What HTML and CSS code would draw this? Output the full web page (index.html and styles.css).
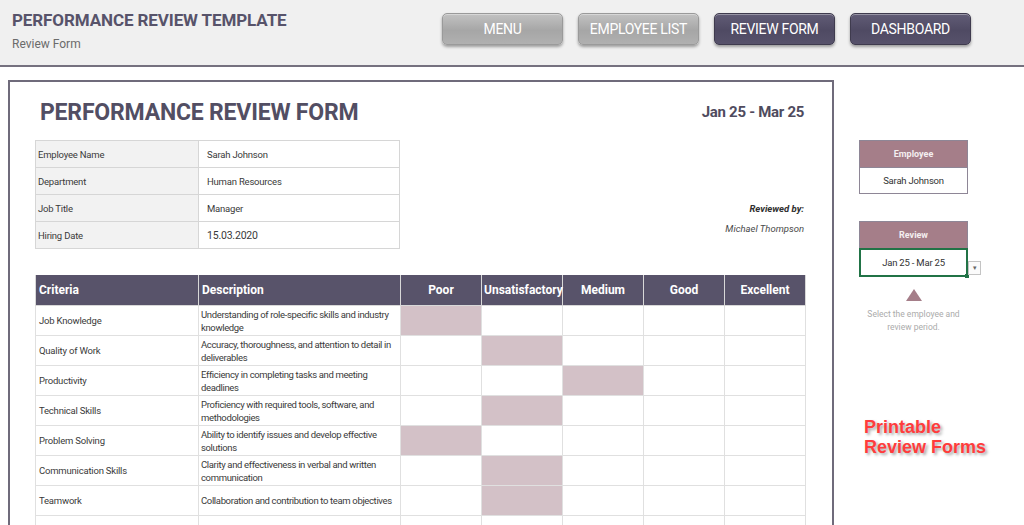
FILE: index.html
```html
<!DOCTYPE html>
<html lang="en">
<head>
  <meta charset="UTF-8">
  <title>Performance Review Template - Review Form</title>
  <link rel="stylesheet" href="styles.css">
</head>
<body>
  <!-- Top bar with title and navigation -->
  <div class="topbar">
    <div class="brand">
      <h1>PERFORMANCE REVIEW TEMPLATE</h1>
      <div class="subtitle">Review Form</div>
    </div>
    <div class="nav">
      <button class="nav-btn light">MENU</button>
      <button class="nav-btn light">EMPLOYEE LIST</button>
      <button class="nav-btn dark">REVIEW FORM</button>
      <button class="nav-btn dark">DASHBOARD</button>
    </div>
  </div>

  <div class="main">
    <!-- Printable form sheet -->
    <div class="sheet">
      <div class="sheet-head">
        <h2>PERFORMANCE REVIEW FORM</h2>
        <div class="period">Jan 25 - Mar 25</div>
      </div>

      <div class="info-row">
        <table class="info">
          <tr><td class="label">Employee Name</td><td>Sarah Johnson</td></tr>
          <tr><td class="label">Department</td><td>Human Resources</td></tr>
          <tr><td class="label">Job Title</td><td>Manager</td></tr>
          <tr><td class="label">Hiring Date</td><td class="date">15.03.2020</td></tr>
        </table>
        <div class="reviewer">
          <div class="reviewer-label">Reviewed by:</div>
          <div class="reviewer-name">Michael Thompson</div>
        </div>
      </div>

      <table class="criteria">
        <colgroup>
          <col class="c-name"><col class="c-desc">
          <col class="c-rate"><col class="c-rate"><col class="c-rate"><col class="c-rate"><col class="c-rate">
        </colgroup>
        <thead>
          <tr>
            <th class="left">Criteria</th>
            <th class="left">Description</th>
            <th>Poor</th>
            <th>Unsatisfactory</th>
            <th>Medium</th>
            <th>Good</th>
            <th>Excellent</th>
          </tr>
        </thead>
        <tbody>
          <tr>
            <td>Job Knowledge</td>
            <td class="desc">Understanding of role-specific skills and industry knowledge</td>
            <td class="on"></td><td></td><td></td><td></td><td></td>
          </tr>
          <tr>
            <td>Quality of Work</td>
            <td class="desc">Accuracy, thoroughness, and attention to detail in deliverables</td>
            <td></td><td class="on"></td><td></td><td></td><td></td>
          </tr>
          <tr>
            <td>Productivity</td>
            <td class="desc">Efficiency in completing tasks and meeting deadlines</td>
            <td></td><td></td><td class="on"></td><td></td><td></td>
          </tr>
          <tr>
            <td>Technical Skills</td>
            <td class="desc">Proficiency with required tools, software, and methodologies</td>
            <td></td><td class="on"></td><td></td><td></td><td></td>
          </tr>
          <tr>
            <td>Problem Solving</td>
            <td class="desc">Ability to identify issues and develop effective solutions</td>
            <td class="on"></td><td></td><td></td><td></td><td></td>
          </tr>
          <tr>
            <td>Communication Skills</td>
            <td class="desc">Clarity and effectiveness in verbal and written communication</td>
            <td></td><td class="on"></td><td></td><td></td><td></td>
          </tr>
          <tr>
            <td>Teamwork</td>
            <td class="desc">Collaboration and contribution to team objectives</td>
            <td></td><td class="on"></td><td></td><td></td><td></td>
          </tr>
          <tr>
            <td>Client Relations</td>
            <td class="desc">Quality of interactions with internal/external clients</td>
            <td></td><td></td><td></td><td></td><td></td>
          </tr>
        </tbody>
      </table>
    </div>

    <!-- Selection controls -->
    <div class="side">
      <div class="picker">
        <div class="picker-head">Employee</div>
        <div class="picker-value">Sarah Johnson</div>
      </div>

      <div class="picker review">
        <div class="picker-head">Review</div>
        <div class="picker-value active">
          Jan 25 - Mar 25
          <span class="handle"></span>
          <span class="dropdown">&#9662;</span>
        </div>
      </div>

      <div class="hint">
        <div class="arrow"></div>
        <p>Select the employee and<br>review period.</p>
      </div>

      <div class="promo">Printable<br>Review Forms</div>
    </div>
  </div>
</body>
</html>
```

FILE: styles.css
```css
/* Base */
body {
  margin: 0;
  font-family: Roboto, "Liberation Sans", sans-serif;
  background-color: #ffffff;
  color: #3a3a3a;
  overflow: hidden;
  height: 525px;
}

/* Top bar */
.topbar {
  height: 65px;
  background-color: #f0f0f0;
  border-bottom: 2px solid #75717f;
  display: flex;
  align-items: flex-start;
}

.brand {
  padding: 10px 0 0 12px;
  width: 430px;
}

.brand h1 {
  margin: 0;
  font-size: 17px;
  font-weight: 700;
  color: #57536a;
  letter-spacing: -0.1px;
}

.subtitle {
  margin-top: 7px;
  font-size: 12px;
  color: #6b6b6b;
}

.nav {
  display: flex;
  gap: 15px;
  margin-top: 13px;
}

.nav-btn {
  width: 121px;
  height: 32px;
  border: none;
  border-radius: 5px;
  color: #ffffff;
  font-family: Roboto, sans-serif;
  font-size: 14px;
  letter-spacing: -0.3px;
  cursor: pointer;
  box-shadow: 0 2px 3px rgba(0, 0, 0, 0.35), inset 0 1px 0 rgba(255, 255, 255, 0.35);
}

.nav-btn.light {
  background: linear-gradient(#c2c2c2, #a6a6a6 55%, #b0b0b0);
  border: 1px solid #9a9a9a;
}

.nav-btn.dark {
  background: linear-gradient(#615c76, #4f4a63 55%, #57526b);
  border: 1px solid #3f3b4e;
}

/* Main area */
.main {
  display: flex;
  align-items: flex-start;
  padding: 13px 0 0 8px;
}

/* Form sheet */
.sheet {
  width: 771px;
  height: 480px;
  border: 2px solid #6f6b7b;
  padding: 0 26px 0 25px;
  flex-shrink: 0;
}

.sheet-head {
  display: flex;
  justify-content: space-between;
  align-items: flex-start;
  padding: 17px 2px 0 5px;
  height: 41px;
}

.sheet-head h2 {
  margin: 0;
  font-size: 23px;
  font-weight: 700;
  color: #524e63;
  letter-spacing: -0.2px;
}

.period {
  margin-top: 4px;
  font-size: 15px;
  font-weight: 700;
  color: #4f4b5e;
  letter-spacing: -0.3px;
}

.info-row {
  display: flex;
  justify-content: space-between;
  height: 135px;
}

/* Employee info table */
.info {
  width: 365px;
  height: 107px;
  border-collapse: collapse;
  border: 1px solid #d0d0d0;
}

.info td {
  border: 1px solid #d6d6d6;
  height: 26px;
  padding: 0 8px;
  font-size: 9.5px;
  letter-spacing: -0.2px;
}

.info td.label {
  width: 152px;
  padding-left: 2px;
  background-color: #f2f2f2;
}

.info td.date {
  font-size: 10.5px;
}

.reviewer {
  text-align: right;
  padding: 63px 2px 0 0;
  font-style: italic;
  font-size: 9.5px;
}

.reviewer-label {
  font-weight: 700;
  color: #2f2f2f;
}

.reviewer-name {
  margin-top: 9px;
  color: #4a4a4a;
}

/* Criteria table */
.criteria {
  width: 770px;
  border-collapse: collapse;
  table-layout: fixed;
}

.c-name { width: 163px; }
.c-desc { width: 202px; }
.c-rate { width: 81px; }

.criteria th {
  height: 30px;
  padding: 0 2px;
  background-color: #58536a;
  color: #ffffff;
  font-size: 12px;
  font-weight: 700;
  border: 1px solid #d8d8d8;
  border-top: none;
  text-align: center;
}

.criteria th.left {
  text-align: left;
  padding-left: 3px;
}

.criteria td {
  height: 29px;
  padding: 0 3px;
  border: 1px solid #e0e0e0;
  font-size: 9.5px;
  letter-spacing: -0.2px;
  line-height: 13px;
  vertical-align: middle;
}

.criteria td.desc {
  padding: 0 1px 0 2px;
  letter-spacing: -0.35px;
}

.criteria td.on {
  background-color: #d3c1c7;
}

/* Side controls */
.side {
  width: 140px;
  padding: 60px 0 0 25px;
  position: relative;
}

.picker {
  width: 109px;
  text-align: center;
}

.picker-head {
  height: 26px;
  line-height: 26px;
  background-color: #a57e89;
  border: 1px solid #8e8696;
  border-bottom: none;
  color: #f4eef0;
  font-size: 9px;
  font-weight: 700;
}

.picker-value {
  height: 25px;
  line-height: 25px;
  border: 1px solid #8e8696;
  font-size: 9.5px;
  color: #333;
  letter-spacing: -0.2px;
}

.picker.review {
  margin-top: 27px;
}

.picker-value.active {
  position: relative;
  height: 25px;
  border: 2px solid #217346;
}

.handle {
  position: absolute;
  right: -3px;
  bottom: -3px;
  width: 4px;
  height: 4px;
  background-color: #217346;
}

.dropdown {
  position: absolute;
  right: -15px;
  top: 11px;
  width: 11px;
  height: 12px;
  line-height: 12px;
  border: 1px solid #c4c4c4;
  background-color: #fbfbfb;
  color: #666;
  font-size: 7px;
}

.hint {
  width: 109px;
  text-align: center;
  margin-top: 12px;
}

.arrow {
  width: 0;
  height: 0;
  margin: 0 auto;
  border-left: 8px solid transparent;
  border-right: 8px solid transparent;
  border-bottom: 12px solid #a57e89;
}

.hint p {
  margin: 7px 0 0;
  font-size: 8.5px;
  line-height: 13px;
  color: #ababab;
}

.promo {
  margin: 83px 0 0 5px;
  font-family: "Liberation Sans", Arial, sans-serif;
  font-size: 18px;
  font-weight: 700;
  line-height: 20px;
  color: #ff3c3c;
  text-shadow: 2px 2px 3px rgba(0, 0, 0, 0.35);
  white-space: nowrap;
}
```
